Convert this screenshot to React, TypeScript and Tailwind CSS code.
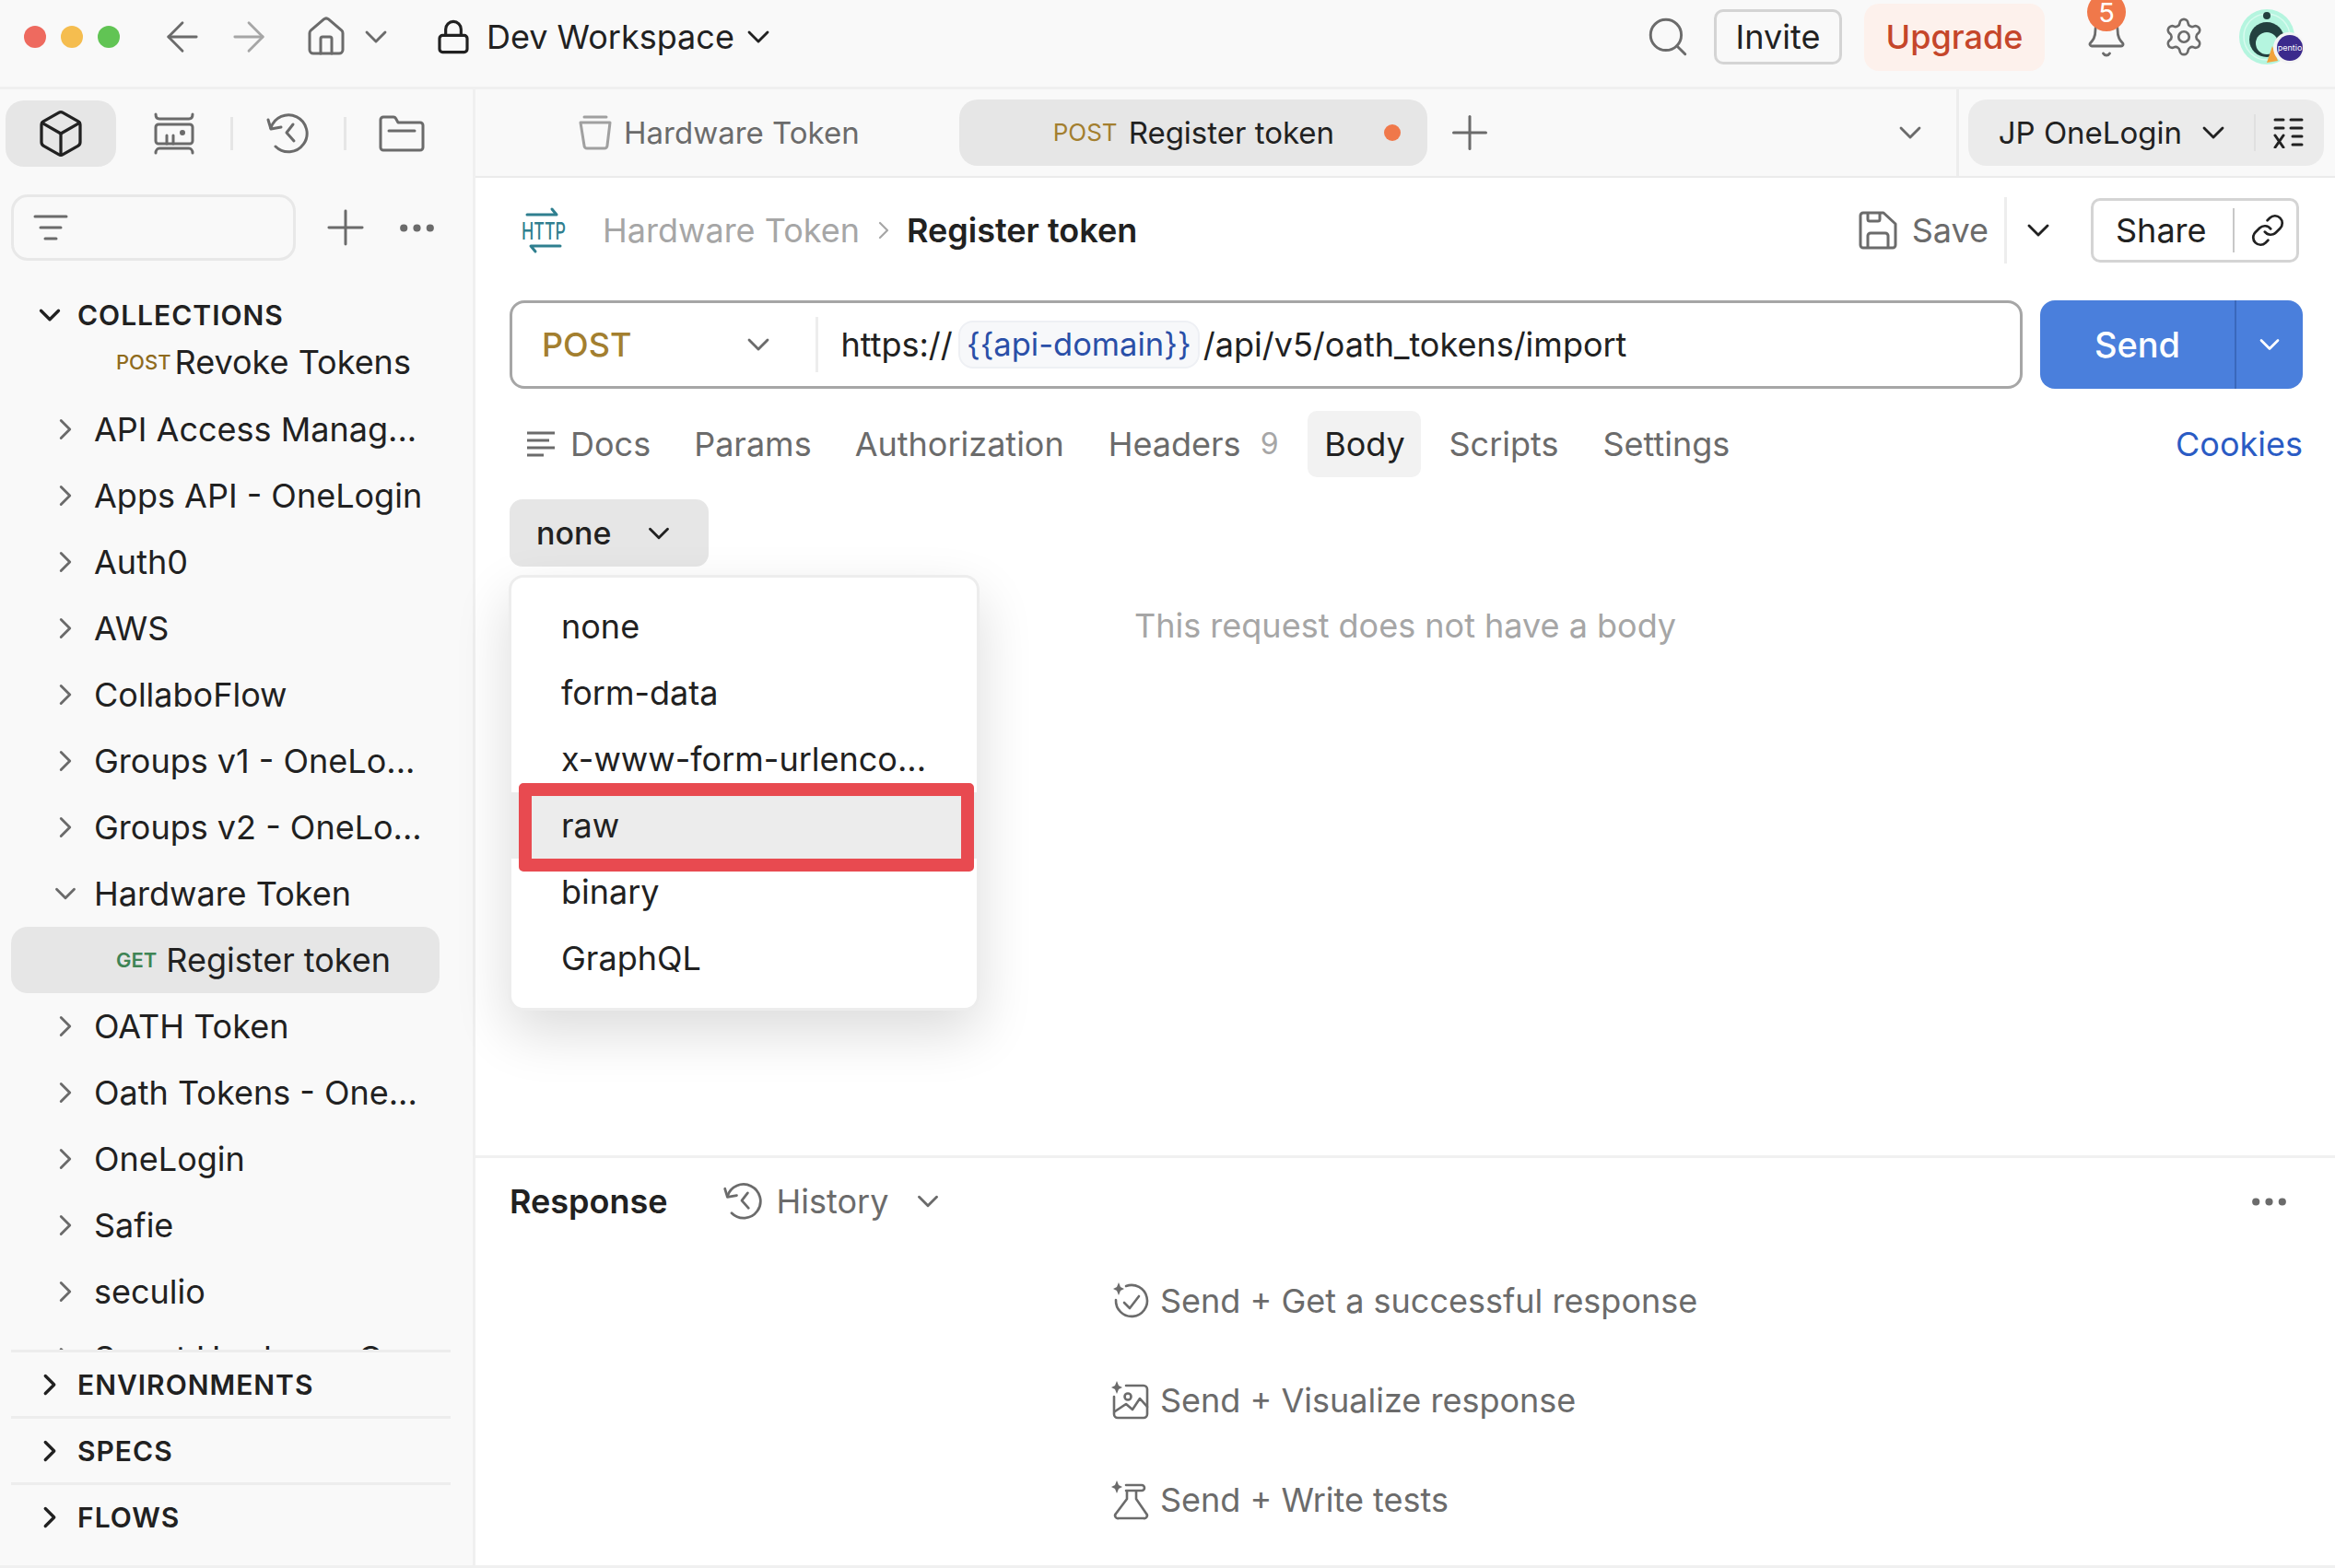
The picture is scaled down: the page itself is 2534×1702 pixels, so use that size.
import React from "react";
import { Box, ChevronDown, ChevronRight, ArrowLeft, ArrowRight, House, Lock, Search, Bell, Settings, Plus, Ellipsis, Link } from "lucide-react";

const HistoryIcon = ({ c = "h-[44px] w-[44px]" }: { c?: string }) => (
  <svg viewBox="0 0 48 48" fill="none" stroke="currentColor" strokeWidth="3" strokeLinecap="round" strokeLinejoin="round" className={c}>
    <path d="M7 18 A20 20 0 1 1 12 38" />
    <path d="M4 9 L7 19 L18 17" />
    <path d="M31 14 L24 23 L32 32" />
  </svg>
);

const CollectionIcon = () => (
  <svg viewBox="0 0 44 46" fill="none" stroke="currentColor" strokeWidth="3" strokeLinecap="round" strokeLinejoin="round" className="h-[46px] w-[44px]">
    <path d="M2 2 C2 6 4 7 6 7 H38 C40 7 42 6 42 2" />
    <rect x="2" y="13" width="40" height="21" rx="3" />
    <path d="M14 34 V25 M21 34 V25" />
    <circle cx="31" cy="22" r="1.5" fill="currentColor" />
    <path d="M2 44 C2 41 4 39 6 39 H38 C40 39 42 41 42 44" />
  </svg>
);

const FolderIcon = () => (
  <svg viewBox="0 0 50 40" fill="none" stroke="currentColor" strokeWidth="3" strokeLinecap="round" strokeLinejoin="round" className="h-[40px] w-[50px]">
    <path d="M2 5 a3 3 0 0 1 3-3 h11 a3 3 0 0 1 2.5 1.5 L21 8 H45 a3 3 0 0 1 3 3 V35 a3 3 0 0 1-3 3 H5 a3 3 0 0 1-3-3 Z" />
    <path d="M11 17 H39" />
  </svg>
);

const FilterIcon = () => (
  <svg viewBox="0 0 38 30" fill="none" stroke="currentColor" strokeWidth="3" strokeLinecap="round" className="h-[30px] w-[38px]">
    <path d="M2 3 H36 M8 15 H30 M13 27 H25" />
  </svg>
);

const TabCollectionIcon = () => (
  <svg viewBox="0 0 36 38" fill="none" stroke="currentColor" strokeWidth="3" strokeLinecap="round" strokeLinejoin="round" className="h-[38px] w-[36px]">
    <path d="M6 2 H30" />
    <path d="M2 8 H34 L31 33 a3 3 0 0 1-3 3 H9 a3 3 0 0 1-3-3 Z" />
  </svg>
);

const EnvLookIcon = () => (
  <svg viewBox="0 0 34 34" fill="none" stroke="currentColor" strokeWidth="3" strokeLinecap="round" className="h-[34px] w-[34px]">
    <path d="M3 3 H12 M20 3 H32 M3 12 H12 M20 12 H32 M22 21 H32 M22 30 H32" />
    <path d="M3 20 L12 33 M12 20 L3 33" />
  </svg>
);

const SaveIcon = () => (
  <svg viewBox="0 0 42 42" fill="none" stroke="currentColor" strokeWidth="3" strokeLinecap="round" strokeLinejoin="round" className="h-[42px] w-[42px]">
    <path d="M2 5 a3 3 0 0 1 3-3 H27 L40 14 V37 a3 3 0 0 1-3 3 H5 a3 3 0 0 1-3-3 Z" />
    <path d="M10 3 V9 a2 2 0 0 0 2 2 H21 a2 2 0 0 0 2-2 V3" />
    <path d="M10 39 V27 a3 3 0 0 1 3-3 H29 a3 3 0 0 1 3 3 V39" />
  </svg>
);

const HttpIcon = () => (
  <svg viewBox="0 0 52 50" fill="none" className="h-[50px] w-[52px] overflow-visible text-[#2f7f8f]">
    <path d="M8 8 H40 L35 2" stroke="currentColor" strokeWidth="3" strokeLinecap="round" strokeLinejoin="round" />
    <path d="M44 42 H12 L17 48" stroke="currentColor" strokeWidth="3" strokeLinecap="round" strokeLinejoin="round" />
    <text x="2" y="35" fontSize="26" fontWeight="500" fontFamily="Inter, sans-serif" fill="currentColor" textLength="48" lengthAdjust="spacingAndGlyphs">HTTP</text>
  </svg>
);

const DocsIcon = () => (
  <svg viewBox="0 0 32 28" fill="none" stroke="currentColor" strokeWidth="3" className="h-[28px] w-[32px]">
    <path d="M0 2 H30 M0 10 H24 M0 18 H30 M0 26 H18" />
  </svg>
);

const Spark = ({ x, y }: { x: number; y: number }) => (
  <path d={`M${x} ${y - 7} L${x + 2} ${y - 2} L${x + 6} ${y} L${x + 2} ${y + 2} L${x} ${y + 7} L${x - 2} ${y + 2} L${x - 6} ${y} L${x - 2} ${y - 2} Z`} fill="currentColor" stroke="none" />
);

const HintCheck = () => (
  <svg viewBox="0 0 46 46" fill="none" stroke="currentColor" strokeWidth="2.6" strokeLinecap="round" strokeLinejoin="round" className="h-[46px] w-[46px] shrink-0">
    <Spark x={10} y={10} />
    <path d="M18 7 A17 17 0 1 1 7 22" />
    <path d="M16 25 L22 31 L32 18" />
  </svg>
);
const HintImage = () => (
  <svg viewBox="0 0 46 46" fill="none" stroke="currentColor" strokeWidth="2.6" strokeLinecap="round" strokeLinejoin="round" className="h-[46px] w-[46px] shrink-0">
    <Spark x={8} y={9} />
    <path d="M18 7 H37 a4 4 0 0 1 4 4 V38 a4 4 0 0 1-4 4 H9 a4 4 0 0 1-4-4 V19" />
    <circle cx="20" cy="19" r="3.5" />
    <path d="M6 35 L18 27 L25 33 L33 21 L41 30" />
  </svg>
);
const HintFlask = () => (
  <svg viewBox="0 0 46 46" fill="none" stroke="currentColor" strokeWidth="2.6" strokeLinecap="round" strokeLinejoin="round" className="h-[46px] w-[46px] shrink-0">
    <Spark x={8} y={9} />
    <path d="M18 7 H35 a3 3 0 0 1 0 6 H18" />
    <path d="M19 14 V22 L7 38 a3 3 0 0 0 3 5 H37 a3 3 0 0 0 3-5 L29 22 V14" />
  </svg>
);

const Avatar = () => (
  <svg viewBox="0 0 74 64" className="h-[64px] w-[74px]">
    <circle cx="30" cy="32" r="30" fill="#b5f5df" />
    <circle cx="30" cy="32" r="25" fill="none" stroke="#d8fbef" strokeWidth="1.5" />
    <circle cx="30" cy="35" r="19" fill="#23403f" />
    <circle cx="30" cy="9" r="4" fill="#23403f" />
    <circle cx="30" cy="39" r="12" fill="#b5f5df" />
    <path d="M36 35 L48 45 L46 58 L36 56 Z" fill="#b5f5df" />
    <path d="M30 60 L36 42 L42 58 Z" fill="#f2a33c" />
    <circle cx="54" cy="44" r="17" fill="#f4f4f4" />
    <circle cx="55" cy="44" r="14" fill="#3b2a8c" />
    <text x="55" y="47" fontSize="9" textAnchor="middle" fill="#fff" fontFamily="Inter, sans-serif">pentio</text>
  </svg>
);

const folders = [
  "API Access Manag...",
  "Apps API - OneLogin",
  "Auth0",
  "AWS",
  "CollaboFlow",
  "Groups v1 - OneLo...",
  "Groups v2 - OneLo...",
];
const folders2 = ["OATH Token", "Oath Tokens - One...", "OneLogin", "Safie", "seculio", "Smart Hardware O..."];

const Folder = ({ name, open = false }: { name: string; open?: boolean }) => (
  <div className="flex h-[72px] shrink-0 items-center text-[36px] text-[#212121]">
    <div className="flex w-[102px] shrink-0 justify-end pr-[12px] text-[#6b6b6b]">
      {open ? <ChevronDown className="h-[38px] w-[38px]" strokeWidth={1.8} /> : <ChevronRight className="h-[38px] w-[38px]" strokeWidth={1.8} />}
    </div>
    <span>{name}</span>
  </div>
);

const Section = ({ name }: { name: string }) => (
  <div className="ml-[12px] flex h-[72px] w-[477px] items-center border-t-[3px] border-[#ededed] text-[30px] font-semibold tracking-[1px] text-[#212121]">
    <ChevronRight className="ml-[23px] mr-[11px] h-[38px] w-[38px]" strokeWidth={2.1} />
    {name}
  </div>
);

const TabLabel = ({ children, c }: { children: React.ReactNode; c: string }) => (
  <span className={`text-[#6b6b6b] ${c}`}>{children}</span>
);

const menu = ["none", "form-data", "x-www-form-urlenco..."];
const menu2 = ["binary", "GraphQL"];

export default function App() {
  return (
    <div className="flex h-[1702px] w-[2534px] flex-col overflow-hidden whitespace-nowrap bg-white font-['Inter',sans-serif] text-[36px] leading-none text-[#212121]">
      {/* title bar */}
      <header className="flex h-[97px] shrink-0 items-center border-b-[3px] border-[#f0f0f0] bg-[#f9f9f9] pb-[14px]">
        <div className="ml-[26px] flex gap-[16px]">
          <span className="h-[24px] w-[24px] rounded-full bg-[#ee6a5f]" />
          <span className="h-[24px] w-[24px] rounded-full bg-[#f5bd4f]" />
          <span className="h-[24px] w-[24px] rounded-full bg-[#61c454]" />
        </div>
        <ArrowLeft className="ml-[42px] h-[52px] w-[52px] text-[#6b6b6b]" strokeWidth={1.3} />
        <ArrowRight className="ml-[20px] h-[52px] w-[52px] text-[#a6a6a6]" strokeWidth={1.3} />
        <House className="ml-[34px] h-[48px] w-[48px] text-[#6b6b6b]" strokeWidth={1.5} />
        <ChevronDown className="ml-[10px] h-[40px] w-[40px] text-[#6b6b6b]" strokeWidth={1.7} />
        <Lock className="ml-[44px] h-[40px] w-[40px] text-[#212121]" strokeWidth={1.9} />
        <span className="ml-[16px]">Dev Workspace</span>
        <ChevronDown className="ml-[6px] h-[40px] w-[40px]" strokeWidth={1.7} />
        <div className="flex-1" />
        <Search className="h-[50px] w-[50px] text-[#6b6b6b]" strokeWidth={1.4} />
        <div className="ml-[25px] flex h-[60px] w-[139px] items-center justify-center rounded-[10px] border-[3px] border-[#d4d4d4]">Invite</div>
        <div className="ml-[24px] flex h-[73px] w-[196px] items-center justify-center rounded-[16px] bg-[#fdf1ec] font-medium text-[#c5462a]">Upgrade</div>
        <div className="relative ml-[43px] flex h-[48px] w-[48px] items-center justify-center text-[#6b6b6b]">
          <Bell className="h-[48px] w-[48px]" strokeWidth={1.4} />
          <span className="absolute left-[3px] top-[-24px] flex h-[42px] w-[42px] items-center justify-center rounded-full bg-[#f0784a] text-[29px] text-white">5</span>
        </div>
        <Settings className="ml-[37px] h-[46px] w-[46px] text-[#6b6b6b]" strokeWidth={1.4} />
        <div className="ml-[37px] mr-[30px]">
          <Avatar />
        </div>
      </header>

      <div className="flex min-h-0 flex-1 border-b-[3px] border-[#f0f0f0]">
        {/* sidebar */}
        <aside className="flex w-[516px] shrink-0 flex-col border-r-[3px] border-[#f0f0f0] bg-[#f9f9f9] pb-[18px]">
          <div className="ml-[6px] mt-[12px] flex h-[72px] items-center text-[#6b6b6b]">
            <div className="flex h-[72px] w-[120px] items-center justify-center rounded-[20px] bg-[#e6e6e6] text-[#212121]">
              <Box className="h-[56px] w-[56px]" strokeWidth={1.4} />
            </div>
            <div className="ml-[41px]"><CollectionIcon /></div>
            <span className="ml-[39px] h-[36px] w-[3px] bg-[#e6e6e6]" />
            <div className="ml-[34px]"><HistoryIcon c="h-[48px] w-[48px]" /></div>
            <span className="ml-[38px] h-[36px] w-[3px] bg-[#e6e6e6]" />
            <div className="ml-[35px]"><FolderIcon /></div>
          </div>
          <div className="ml-[12px] mt-[30px] flex h-[72px] items-center">
            <div className="flex h-[72px] w-[309px] items-center rounded-[18px] border-[3px] border-[#e8e8e8] pl-[21px] text-[#6b6b6b]">
              <FilterIcon />
            </div>
            <Plus className="ml-[23px] h-[62px] w-[62px] text-[#6b6b6b]" strokeWidth={1.15} />
            <Ellipsis className="ml-[22px] h-[49px] w-[49px] text-[#6b6b6b]" strokeWidth={2} />
          </div>
          <div className="mt-[32px] min-h-0 flex-1 overflow-hidden">
            <div className="ml-[12px] flex h-[52px] items-center pt-[2px] text-[30px] font-semibold tracking-[1px]">
              <ChevronDown className="ml-[23px] mr-[11px] h-[38px] w-[38px]" strokeWidth={2.1} />
              COLLECTIONS
            </div>
            <div className="mb-[11px] flex h-[52px] items-center pl-[126px]">
              <span className="mr-[4px] text-[22px] font-medium text-[#8f6b1e]">POST</span>Revoke Tokens
            </div>
            {folders.map((f) => <Folder key={f} name={f} />)}
            <Folder name="Hardware Token" open />
            <div className="ml-[12px] flex h-[72px] w-[465px] items-center rounded-[18px] bg-[#e6e6e6] pl-[114px]">
              <span className="mr-[10px] text-[22px] font-semibold text-[#3f8455]">GET</span>Register token
            </div>
            {folders2.map((f) => <Folder key={f} name={f} />)}
          </div>
          <Section name="ENVIRONMENTS" />
          <Section name="SPECS" />
          <Section name="FLOWS" />
        </aside>

        {/* main */}
        <main className="flex min-w-0 flex-1 flex-col">
          <div className="flex h-[96px] shrink-0 items-center border-b-[2px] border-[#ebebeb] bg-[#f9f9f9] text-[33px]">
            <div className="ml-[112px] text-[#a0a0a0]"><TabCollectionIcon /></div>
            <TabLabel c="ml-[13px]">Hardware Token</TabLabel>
            <div className="ml-[108px] flex h-[72px] w-[508px] shrink-0 items-center rounded-[20px] bg-[#e6e6e6] pl-[102px]">
              <span className="text-[26px] text-[#a37f2f]">POST</span>
              <span className="ml-[12px]">Register token</span>
              <span className="ml-[54px] h-[18px] w-[18px] rounded-full bg-[#f0784a]" />
            </div>
            <Plus className="ml-[16px] h-[60px] w-[60px] text-[#6b6b6b]" strokeWidth={1.2} />
            <ChevronDown className="ml-[428px] h-[40px] w-[40px] text-[#6b6b6b]" strokeWidth={1.7} />
            <div className="ml-[30px] flex h-full flex-1 items-center border-l-[3px] border-[#ededed] pl-[10px]">
              <div className="flex h-[72px] w-[386px] shrink-0 items-center rounded-[20px] bg-[#ebebeb] pl-[33px]">
                <span>JP OneLogin</span>
                <ChevronDown className="ml-[14px] h-[40px] w-[40px]" strokeWidth={1.7} />
                <span className="ml-[24px] h-[40px] w-[2px] bg-[#e0e0e0]" />
                <span className="ml-[18px]"><EnvLookIcon /></span>
              </div>
            </div>
          </div>

          <div className="flex h-[114px] shrink-0 items-center">
            <div className="ml-[48px]"><HttpIcon /></div>
            <span className="ml-[38px] text-[#a6a6a6]">Hardware Token</span>
            <ChevronRight className="ml-[10px] h-[32px] w-[32px] text-[#a6a6a6]" strokeWidth={1.6} />
            <span className="ml-[9px] font-semibold">Register token</span>
            <div className="flex-1" />
            <div className="text-[#6b6b6b]"><SaveIcon /></div>
            <span className="ml-[16px] text-[#6b6b6b]">Save</span>
            <span className="ml-[17px] h-[72px] w-[3px] bg-[#ededed]" />
            <ChevronDown className="ml-[14px] h-[40px] w-[40px]" strokeWidth={1.7} />
            <div className="ml-[37px] mr-[39px] flex h-[70px] w-[226px] shrink-0 items-center rounded-[10px] border-[3px] border-[#d4d4d4] pl-[24px]">
              <span>Share</span>
              <span className="ml-[28px] h-[48px] w-[2px] bg-[#c8c8c8]" />
              <Link className="ml-[17px] h-[38px] w-[38px]" strokeWidth={1.7} />
            </div>
          </div>

          <div className="ml-[37px] mt-[19px] flex h-[96px] shrink-0">
            <div className="flex h-[96px] w-[1642px] shrink-0 items-center rounded-[16px] border-[3px] border-[#a6a6a6]">
              <span className="ml-[32px] font-medium text-[#a37f2f]">POST</span>
              <ChevronDown className="ml-[118px] h-[40px] w-[40px] text-[#6b6b6b]" strokeWidth={1.7} />
              <span className="ml-[42px] h-[60px] w-[3px] bg-[#ededed]" />
              <span className="ml-[24px]">https://</span>
              <span className="ml-[6px] flex h-[52px] w-[262px] shrink-0 items-center justify-center rounded-[16px] border-[2px] border-[#eef0f4] bg-[#f7f8fa] text-[34.5px] text-[#2a4fa8]">{"{{api-domain}}"}</span>
              <span className="ml-[4px]">/api/v5/oath_tokens/import</span>
            </div>
            <div className="ml-[19px] flex h-[96px] w-[285px] shrink-0 items-center rounded-[16px] bg-[#4a7fdc] text-white">
              <span className="w-[211px] text-center text-[38px] font-medium">Send</span>
              <span className="h-full w-[2px] bg-[#3a68bb]" />
              <ChevronDown className="ml-[18px] h-[36px] w-[36px]" strokeWidth={1.8} />
            </div>
          </div>

          <div className="mt-[24px] flex h-[72px] shrink-0 items-center">
            <div className="ml-[56px] text-[#6b6b6b]"><DocsIcon /></div>
            <TabLabel c="ml-[15px]">Docs</TabLabel>
            <TabLabel c="ml-[47px]">Params</TabLabel>
            <TabLabel c="ml-[47px]">Authorization</TabLabel>
            <TabLabel c="ml-[48px]">Headers</TabLabel>
            <span className="ml-[21px] text-[32px] text-[#a6a6a6]">9</span>
            <div className="ml-[32px] flex h-[72px] w-[123px] shrink-0 items-center justify-center rounded-[10px] bg-[#f2f2f2]">Body</div>
            <TabLabel c="ml-[30px]">Scripts</TabLabel>
            <TabLabel c="ml-[48px]">Settings</TabLabel>
            <div className="flex-1" />
            <span className="mr-[35px] text-[#2a5bc4]">Cookies</span>
          </div>

          <div className="relative min-h-0 flex-1">
            <div className="ml-[37px] mt-[24px] flex h-[73px] w-[216px] items-center rounded-[14px] bg-[#e6e6e6] pl-[29px] text-[34px] font-medium">
              none
              <ChevronDown className="ml-[33px] h-[38px] w-[38px]" strokeWidth={1.8} />
            </div>
            <p className="ml-[715px] mt-[46px] text-[#a6a6a6]">This request does not have a body</p>

            <div className="absolute left-[36px] top-[106px] h-[473px] w-[511px] rounded-[16px] border-[3px] border-[#ededed] bg-white py-[17px] shadow-[0_24px_60px_rgba(0,0,0,0.14)]">
              {menu.map((m) => (
                <div key={m} className="flex h-[72px] items-center pl-[54px]">{m}</div>
              ))}
              <div className="flex h-[72px] items-center bg-[#ececec] pl-[54px]">raw</div>
              {menu2.map((m) => (
                <div key={m} className="flex h-[72px] items-center pl-[54px]">{m}</div>
              ))}
            </div>
            <div className="absolute left-[47px] top-[332px] h-[96px] w-[494px] rounded-[5px] border-[14px] border-[#e84a50]" />
          </div>

          <section className="h-[445px] shrink-0 border-t-[3px] border-[#f0f0f0]">
            <div className="flex h-[94px] items-center">
              <span className="ml-[37px] font-semibold">Response</span>
              <div className="ml-[58px] text-[#6b6b6b]"><HistoryIcon /></div>
              <span className="ml-[16px] text-[#6b6b6b]">History</span>
              <ChevronDown className="ml-[24px] h-[38px] w-[38px] text-[#6b6b6b]" strokeWidth={1.8} />
              <div className="flex-1" />
              <Ellipsis className="mr-[47px] h-[49px] w-[49px] text-[#6b6b6b]" strokeWidth={2} />
            </div>
            <div className="ml-[688px] mt-[7px] text-[#6b6b6b]">
              <div className="flex h-[108px] items-center gap-[9px]"><HintCheck />Send + Get a successful response</div>
              <div className="flex h-[108px] items-center gap-[9px]"><HintImage />Send + Visualize response</div>
              <div className="flex h-[108px] items-center gap-[9px]"><HintFlask />Send + Write tests</div>
            </div>
          </section>
        </main>
      </div>
    </div>
  );
}
